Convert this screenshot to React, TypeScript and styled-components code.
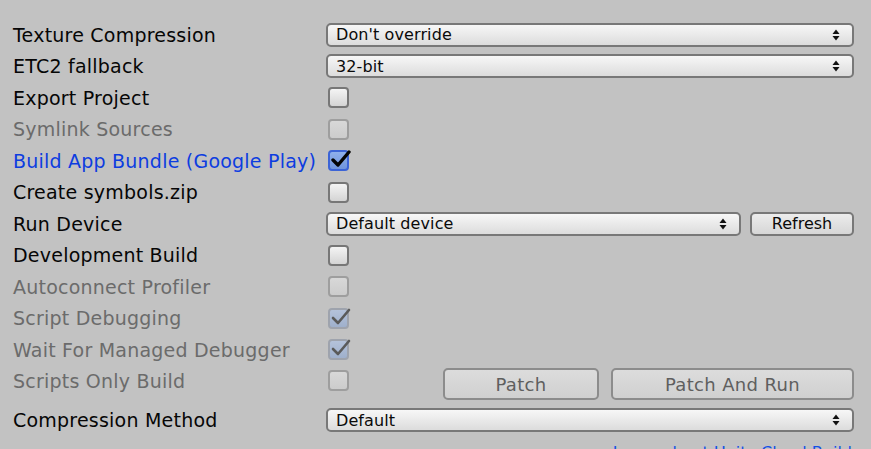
import React from 'react';
import styled, { createGlobalStyle, css } from 'styled-components';

const GlobalStyle = createGlobalStyle`
  html, body {
    margin: 0;
    padding: 0;
    background: #c2c2c2;
    overflow: hidden;
  }
  body {
    font-family: "DejaVu Sans", Verdana, sans-serif;
  }
`;

const Panel = styled.div`
  width: 871px;
  height: 449px;
  box-sizing: border-box;
  padding: 18px 17px 0 13px;
  background: #c2c2c2;
  overflow: hidden;
`;

const Row = styled.div<{ $tall?: boolean }>`
  display: grid;
  grid-template-columns: 313px 1fr;
  height: ${(p) => (p.$tall ? '39px' : '31.5px')};
  align-items: ${(p) => (p.$tall ? 'start' : 'center')};
`;

const Label = styled.div<{ $state?: 'normal' | 'disabled' | 'modified' }>`
  font-size: 19px;
  letter-spacing: 0.22px;
  line-height: 31.5px;
  padding-top: 1.5px;
  white-space: nowrap;
  color: ${(p) =>
    p.$state === 'disabled' ? '#6b6b6b' : p.$state === 'modified' ? '#0d3de0' : '#060606'};
`;

const Control = styled.div<{ $tall?: boolean }>`
  display: flex;
  align-items: ${(p) => (p.$tall ? 'flex-start' : 'center')};
  gap: 9px;
  min-width: 0;
`;

const controlFace = css`
  box-sizing: border-box;
  border: 2px solid #787878;
  border-radius: 5px;
  background: linear-gradient(#f7f7f7, #dcdcdc);
  font-family: "DejaVu Sans", Verdana, sans-serif;
  color: #0a0a0a;
`;

const Select = styled.div`
  ${controlFace};
  flex: 1;
  height: 24px;
  display: flex;
  align-items: center;
  justify-content: space-between;
  padding: 0 12px 0 8px;
  font-size: 16px;
  letter-spacing: 0.1px;
  white-space: nowrap;
`;

const Button = styled.div<{ $disabled?: boolean; $width?: number }>`
  ${controlFace};
  ${(p) => (p.$width ? `width: ${p.$width}px;` : 'flex: 1;')}
  display: flex;
  align-items: center;
  justify-content: center;
  ${(p) =>
    p.$disabled
      ? css`
          height: 32px;
          font-size: 18px;
          letter-spacing: 0.35px;
          color: #5f5f5f;
          border-color: #8c8c8c;
          background: linear-gradient(#dcdcdc, #d0d0d0);
        `
      : css`
          height: 24px;
          font-size: 16px;
          background: linear-gradient(#ececec, #d6d6d6);
        `}
`;

const Box = styled.div<{ $disabled?: boolean; $checked?: boolean; $top?: number }>`
  box-sizing: border-box;
  width: 21px;
  height: 21px;
  margin-left: 2px;
  margin-top: ${(p) => p.$top ?? 0}px;
  border-radius: 4px;
  border: 2px solid #777;
  background: linear-gradient(#f4f4f4, #d4d4d4);
  display: flex;
  align-items: center;
  justify-content: center;
  ${(p) =>
    p.$disabled &&
    css`
      border-color: #9e9e9e;
      background: linear-gradient(#d8d8d8, #cccccc);
    `}
  ${(p) =>
    p.$checked &&
    !p.$disabled &&
    css`
      border-color: #3c64d6;
      background: linear-gradient(#8fb0ec, #6f94dc);
    `}
  ${(p) =>
    p.$checked &&
    p.$disabled &&
    css`
      border-color: #9ea3ad;
      background: linear-gradient(#b4c2da, #9fb0cc);
    `}
`;

const ButtonGroup = styled.div`
  margin-left: auto;
  margin-top: 3.75px;
  width: 411px;
  display: flex;
  gap: 12px;
`;

const Footer = styled.div`
  margin-top: 10px;
  padding-right: 2px;
  text-align: right;
  font-size: 16px;
  line-height: 16px;
  color: #1550e6;
  white-space: nowrap;
`;

const Arrows = () => (
  <svg width="8" height="12" viewBox="0 0 8 12">
    <path d="M4 0.5 L7.5 5 L0.5 5 Z" fill="#111" />
    <path d="M4 11.5 L7.5 7 L0.5 7 Z" fill="#111" />
  </svg>
);

const Check = ({ disabled }: { disabled?: boolean }) => (
  <svg width="20" height="18" viewBox="0 0 20 18" style={{ marginTop: -3, marginRight: -4 }}>
    <path
      d="M2 10 L7 15 L18 2"
      fill="none"
      stroke={disabled ? '#5a5a5a' : '#050505'}
      strokeWidth={disabled ? 2.6 : 3.4}
      strokeLinecap="round"
      strokeLinejoin="round"
    />
  </svg>
);

const Checkbox = ({ disabled, checked, top }: { disabled?: boolean; checked?: boolean; top?: number }) => (
  <Box $disabled={disabled} $checked={checked} $top={top}>
    {checked && <Check disabled={disabled} />}
  </Box>
);

const Dropdown = ({ value }: { value: string }) => (
  <Select>
    <span>{value}</span>
    <Arrows />
  </Select>
);

type Toggle = { label: string; state?: 'normal' | 'disabled' | 'modified'; checked?: boolean };

const toggles: Toggle[] = [
  { label: 'Export Project' },
  { label: 'Symlink Sources', state: 'disabled' },
  { label: 'Build App Bundle (Google Play)', state: 'modified', checked: true },
  { label: 'Create symbols.zip' },
];

const debugToggles: Toggle[] = [
  { label: 'Development Build' },
  { label: 'Autoconnect Profiler', state: 'disabled' },
  { label: 'Script Debugging', state: 'disabled', checked: true },
  { label: 'Wait For Managed Debugger', state: 'disabled', checked: true },
];

const ToggleRow = ({ t }: { t: Toggle }) => (
  <Row>
    <Label $state={t.state}>{t.label}</Label>
    <Control>
      <Checkbox disabled={t.state === 'disabled'} checked={t.checked} />
    </Control>
  </Row>
);

export default function App() {
  return (
    <>
      <GlobalStyle />
      <Panel>
        <Row>
          <Label>Texture Compression</Label>
          <Control>
            <Dropdown value="Don't override" />
          </Control>
        </Row>
        <Row>
          <Label>ETC2 fallback</Label>
          <Control>
            <Dropdown value="32-bit" />
          </Control>
        </Row>
        {toggles.map((t) => (
          <ToggleRow key={t.label} t={t} />
        ))}
        <Row>
          <Label>Run Device</Label>
          <Control>
            <Dropdown value="Default device" />
            <Button $width={104}>Refresh</Button>
          </Control>
        </Row>
        {debugToggles.map((t) => (
          <ToggleRow key={t.label} t={t} />
        ))}
        <Row $tall>
          <Label $state="disabled">Scripts Only Build</Label>
          <Control $tall>
            <Checkbox disabled top={5.5} />
            <ButtonGroup>
              <Button $disabled $width={156}>Patch</Button>
              <Button $disabled>Patch And Run</Button>
            </ButtonGroup>
          </Control>
        </Row>
        <Row>
          <Label>Compression Method</Label>
          <Control>
            <Dropdown value="Default" />
          </Control>
        </Row>
        <Footer>Learn about Unity Cloud Build</Footer>
      </Panel>
    </>
  );
}
